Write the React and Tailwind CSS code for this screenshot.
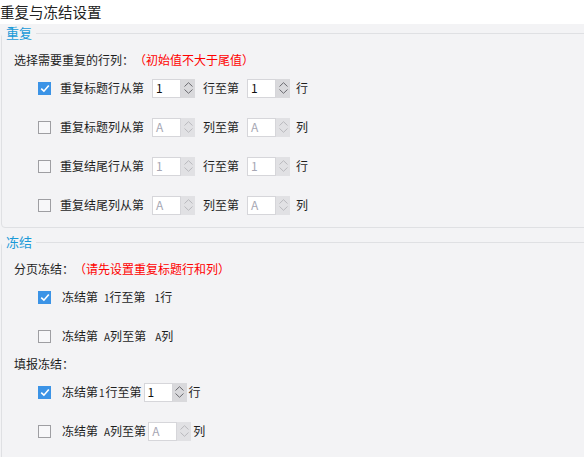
import React from "react";

function Checkbox({ checked }) {
  return checked ? (
    <span className="flex h-[13px] w-[13px] shrink-0 items-center justify-center bg-[#3b93e6]">
      <svg width="10" height="9" viewBox="0 0 10 9">
        <path d="M1.2 4.6 L3.9 7.2 L8.8 1.4" fill="none" stroke="#fff" strokeWidth="1.6" />
      </svg>
    </span>
  ) : (
    <span className="h-[13px] w-[13px] shrink-0 border border-[#9e9ea2] bg-[#f7f7f9]" />
  );
}

function Spinner({ value, disabled }) {
  const chev = disabled ? "#b9b9bd" : "#6b6b70";
  return (
    <span className="flex h-[19px] shrink-0">
      <span
        className={`flex w-[29px] items-center border border-[#d6d6da] bg-white pl-[3px] text-[12px] ${
          disabled ? "text-[#a7a7b4]" : "text-[#111]"
        }`}
      >
        {value}
      </span>
      <span className={`flex w-[14px] flex-col items-center justify-center gap-[2px] ${disabled ? "bg-[#e1e1e4]" : "bg-[#d9d9dc]"}`}>
        <svg width="9" height="5" viewBox="0 0 9 5">
          <path d="M0.5 4.5 L4.5 0.7 L8.5 4.5" fill="none" stroke={chev} strokeWidth="1" />
        </svg>
        <svg width="9" height="5" viewBox="0 0 9 5">
          <path d="M0.5 0.5 L4.5 4.3 L8.5 0.5" fill="none" stroke={chev} strokeWidth="1" />
        </svg>
      </span>
    </span>
  );
}

function RepeatRow({ checked, label, unit, value, disabled }) {
  return (
    <div className="flex h-5 items-center pl-[36px]">
      <Checkbox checked={checked} />
      <span className="ml-[9px] mr-2">{label}从第</span>
      <Spinner value={value} disabled={disabled} />
      <span className="mx-2">{unit}至第</span>
      <Spinner value={value} disabled={disabled} />
      <span className="ml-[6px]">{unit}</span>
    </div>
  );
}

function FreezeRow({ checked, unit, value }) {
  return (
    <div className="flex h-5 items-center pl-[36px]">
      <Checkbox checked={checked} />
      <span className="ml-[11px]">冻结第</span>
      <span className="ml-[6px] text-[10px]">{value}</span>
      <span>{unit}至第</span>
      <span className="ml-[9px] text-[10px]">{value}</span>
      <span>{unit}</span>
    </div>
  );
}

export default function App() {
  return (
    <div
      className="h-[457px] w-full overflow-hidden bg-[#f3f3f5] text-[12px] text-[#1e1e1e]"
      style={{ fontFamily: '"Noto Sans CJK SC", "Noto Sans", sans-serif' }}
    >
      <div className="flex h-6 items-center bg-white text-[14.5px] leading-none text-[#222]">重复与冻结设置</div>

      <fieldset className="ml-px w-[640px] rounded border border-[#dfe0e3] pb-[12px]">
        <legend className="px-1 text-[13px] leading-[18px] text-[#1a9ad8]">重复</legend>
        <div className="flex flex-col gap-[19px] pt-[9px]">
          <div className="-mb-[10px] flex h-[18px] items-center pl-[12px]">
            <span>选择需要重复的行列：</span>
            <span className="text-[#ff0000]">（初始值不大于尾值）</span>
          </div>
          <RepeatRow checked label="重复标题行" unit="行" value="1" />
          <RepeatRow label="重复标题列" unit="列" value="A" disabled />
          <RepeatRow label="重复结尾行" unit="行" value="1" disabled />
          <RepeatRow label="重复结尾列" unit="列" value="A" disabled />
        </div>
      </fieldset>

      <fieldset className="ml-px mt-[5px] w-[640px] rounded border border-[#dfe0e3] pb-[40px]">
        <legend className="px-1 text-[13px] leading-[18px] text-[#1a9ad8]">冻结</legend>
        <div className="flex flex-col pt-[9px]">
          <div className="flex h-[18px] items-center pl-[12px]">
            <span>分页冻结：</span>
            <span className="text-[#ff0000]">（请先设置重复标题行和列）</span>
          </div>
          <div className="mt-[9px]">
            <FreezeRow checked unit="行" value="1" />
          </div>
          <div className="mt-[19px]">
            <FreezeRow unit="列" value="A" />
          </div>
          <div className="mt-[9px] flex h-[18px] items-center pl-[12px]">填报冻结：</div>
          <div className="mt-[9px] flex h-5 items-center pl-[36px]">
            <Checkbox checked />
            <span className="ml-[11px]">冻结第</span>
            <span className="mx-px text-[10px]">1</span>
            <span className="mr-[2px]">行至第</span>
            <Spinner value="1" />
            <span className="ml-[2px]">行</span>
          </div>
          <div className="mt-[19px] flex h-5 items-center pl-[36px]">
            <Checkbox />
            <span className="ml-[11px]">冻结第</span>
            <span className="ml-[6px] text-[10px]">A</span>
            <span className="mr-[2px]">列至第</span>
            <Spinner value="A" disabled />
            <span className="ml-[2px]">列</span>
          </div>
        </div>
      </fieldset>
    </div>
  );
}
